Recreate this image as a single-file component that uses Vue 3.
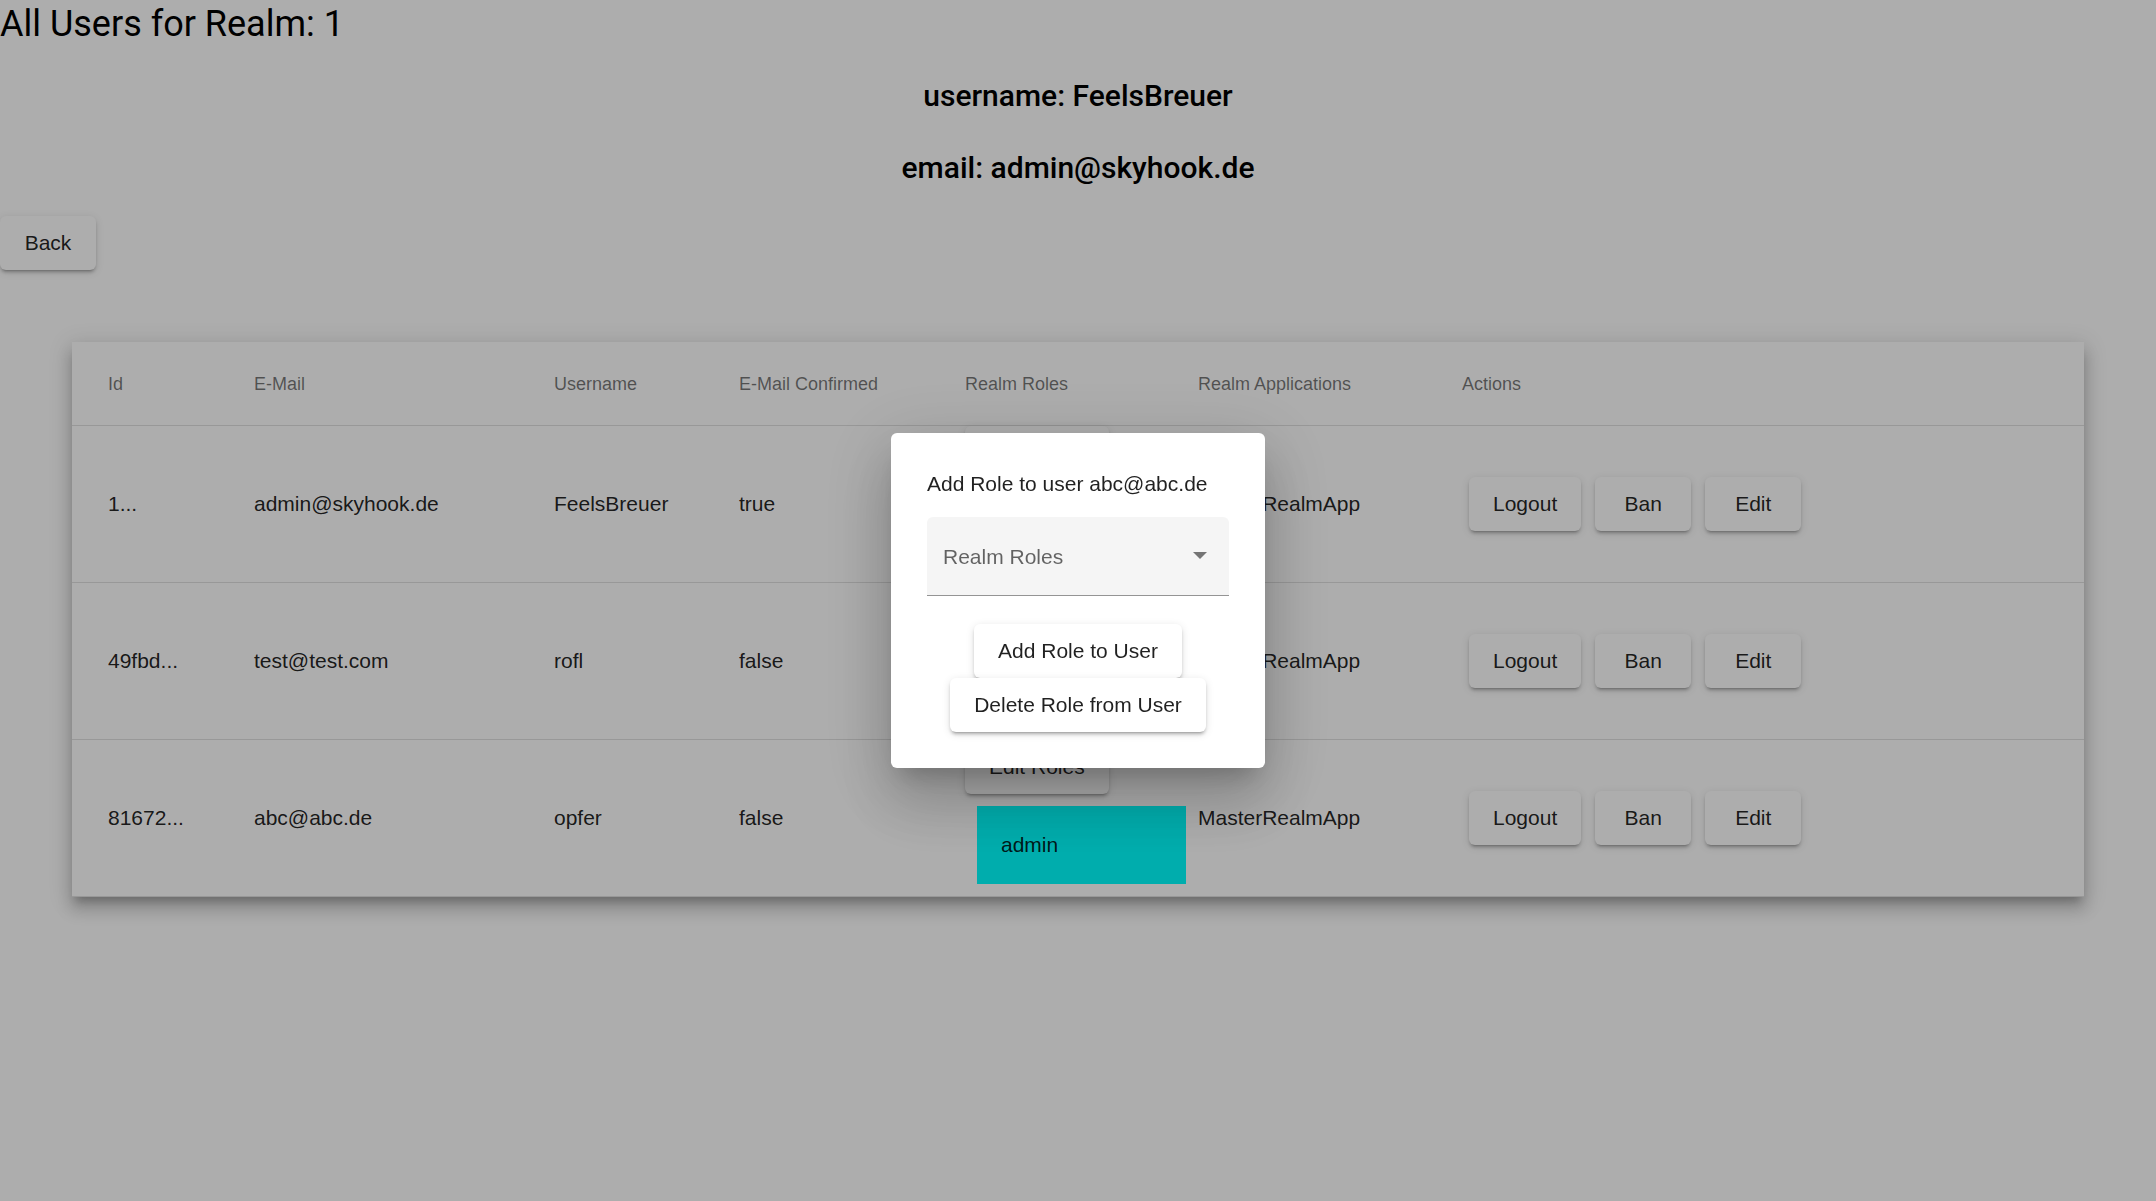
<script setup>
import { ref } from 'vue'

const realmId = 1
const admin = { username: 'FeelsBreuer', email: 'admin@skyhook.de' }

const users = [
  { id: '1...', email: 'admin@skyhook.de', username: 'FeelsBreuer', confirmed: true, roles: ['admin'], app: 'MasterRealmApp' },
  { id: '49fbd...', email: 'test@test.com', username: 'rofl', confirmed: false, roles: [], app: 'MasterRealmApp' },
  { id: '81672...', email: 'abc@abc.de', username: 'opfer', confirmed: false, roles: ['admin'], app: 'MasterRealmApp' },
]

const selectedUser = users[2]
const selectedRole = ref('')
</script>

<template>
  <main class="page">
    <h1 class="title">All Users for Realm: {{ realmId }}</h1>
    <h2 class="subtitle">username: {{ admin.username }}</h2>
    <h2 class="subtitle">email: {{ admin.email }}</h2>
    <button type="button" class="btn">Back</button>

    <div class="table-card">
      <table class="users">
        <colgroup>
          <col class="col-id" />
          <col class="col-email" />
          <col class="col-username" />
          <col class="col-confirmed" />
          <col class="col-roles" />
          <col class="col-apps" />
          <col />
        </colgroup>
        <thead>
          <tr>
            <th scope="col">Id</th>
            <th scope="col">E-Mail</th>
            <th scope="col">Username</th>
            <th scope="col">E-Mail Confirmed</th>
            <th scope="col">Realm Roles</th>
            <th scope="col">Realm Applications</th>
            <th scope="col">Actions</th>
          </tr>
        </thead>
        <tbody>
          <tr v-for="user in users" :key="user.id">
            <td>{{ user.id }}</td>
            <td>{{ user.email }}</td>
            <td>{{ user.username }}</td>
            <td>{{ user.confirmed }}</td>
            <td class="roles-cell">
              <button type="button" class="btn">Edit Roles</button>
              <div v-for="role in user.roles" :key="role" class="role">{{ role }}</div>
            </td>
            <td>{{ user.app }}</td>
            <td>
              <div class="actions">
                <button type="button" class="btn">Logout</button>
                <button type="button" class="btn">Ban</button>
                <button type="button" class="btn">Edit</button>
              </div>
            </td>
          </tr>
        </tbody>
      </table>
    </div>
  </main>

  <div class="backdrop">
    <form class="dialog" role="dialog" aria-modal="true" @submit.prevent>
      <label class="dialog-label" for="role-select">Add Role to user {{ selectedUser.email }}</label>
      <div class="field">
        <select id="role-select" v-model="selectedRole" class="select">
          <option value="" disabled>Realm Roles</option>
          <option value="admin">admin</option>
        </select>
        <svg class="arrow" viewBox="0 0 14 7" aria-hidden="true"><path d="M0 0h14L7 7z" /></svg>
      </div>
      <div class="dialog-actions">
        <button type="button" class="btn">Add Role to User</button>
        <button type="button" class="btn">Delete Role from User</button>
      </div>
    </form>
  </div>
</template>

<style>
body {
  margin: 0;
  background: #fff;
}
</style>

<style scoped>
.page,
.backdrop {
  font-family: "Liberation Sans", Arial, sans-serif;
  font-size: 21px;
  line-height: 30px;
  color: rgba(0, 0, 0, 0.87);
}

.title,
.subtitle {
  margin: 0 0 24px;
  font-family: Roboto, sans-serif;
  line-height: 48px;
  color: #000;
}

.title {
  font-size: 36px;
  font-weight: 400;
}

.subtitle {
  font-size: 30px;
  font-weight: 500;
  text-align: center;
}

.btn {
  display: block;
  box-sizing: border-box;
  min-width: 96px;
  height: 54px;
  padding: 0 24px;
  border: 0;
  border-radius: 6px;
  background: #fff;
  color: inherit;
  font: inherit;
  white-space: nowrap;
  cursor: pointer;
  box-shadow:
    0 4px 2px -3px rgba(0, 0, 0, 0.2),
    0 3px 3px 0 rgba(0, 0, 0, 0.14),
    0 2px 8px 0 rgba(0, 0, 0, 0.12);
}

.table-card {
  margin: 72px;
  background: #fff;
  box-shadow:
    0 8px 8px -4px rgba(0, 0, 0, 0.2),
    0 12px 15px 2px rgba(0, 0, 0, 0.14),
    0 4px 21px 3px rgba(0, 0, 0, 0.12);
}

.users {
  width: 100%;
  table-layout: fixed;
  border-collapse: separate;
  border-spacing: 0;
}

.col-id { width: 182px; }
.col-email { width: 300px; }
.col-username { width: 185px; }
.col-confirmed { width: 226px; }
.col-roles { width: 233px; }
.col-apps { width: 264px; }

th,
td {
  box-sizing: border-box;
  padding: 0;
  border-bottom: 1px solid rgba(0, 0, 0, 0.12);
  text-align: left;
  vertical-align: middle;
}

th {
  height: 84px;
  font-size: 18px;
  font-weight: 400;
  color: rgba(0, 0, 0, 0.54);
}

td {
  height: 157px;
}

th:first-child,
td:first-child {
  padding-left: 36px;
}

.roles-cell {
  vertical-align: top;
}

.role {
  margin: 12px;
  padding: 24px;
  background: #0ff;
}

.actions {
  display: flex;
  gap: 14px;
  padding-left: 7px;
}

.backdrop {
  position: fixed;
  inset: 0;
  display: flex;
  align-items: center;
  justify-content: center;
  background: rgba(0, 0, 0, 0.32);
}

.dialog {
  display: flex;
  flex-direction: column;
  padding: 36px;
  border-radius: 6px;
  background: #fff;
  box-shadow:
    0 16px 22px -10px rgba(0, 0, 0, 0.2),
    0 36px 57px 4px rgba(0, 0, 0, 0.14),
    0 14px 69px 12px rgba(0, 0, 0, 0.12);
}

.dialog-label {
  margin-bottom: 18px;
}

.field {
  position: relative;
  width: 302px;
  margin-bottom: 28px;
}

.select {
  display: block;
  box-sizing: border-box;
  width: 100%;
  height: 79px;
  padding: 2px 48px 0 16px;
  border: 0;
  border-bottom: 1px solid #949494;
  border-radius: 6px 6px 0 0;
  background: #f5f5f5;
  color: rgba(0, 0, 0, 0.6);
  font: inherit;
  appearance: none;
}

.arrow {
  position: absolute;
  top: 35px;
  right: 22px;
  width: 14px;
  height: 7px;
  fill: #757575;
  pointer-events: none;
}

.dialog-actions {
  display: flex;
  flex-direction: column;
  align-items: center;
}
</style>
